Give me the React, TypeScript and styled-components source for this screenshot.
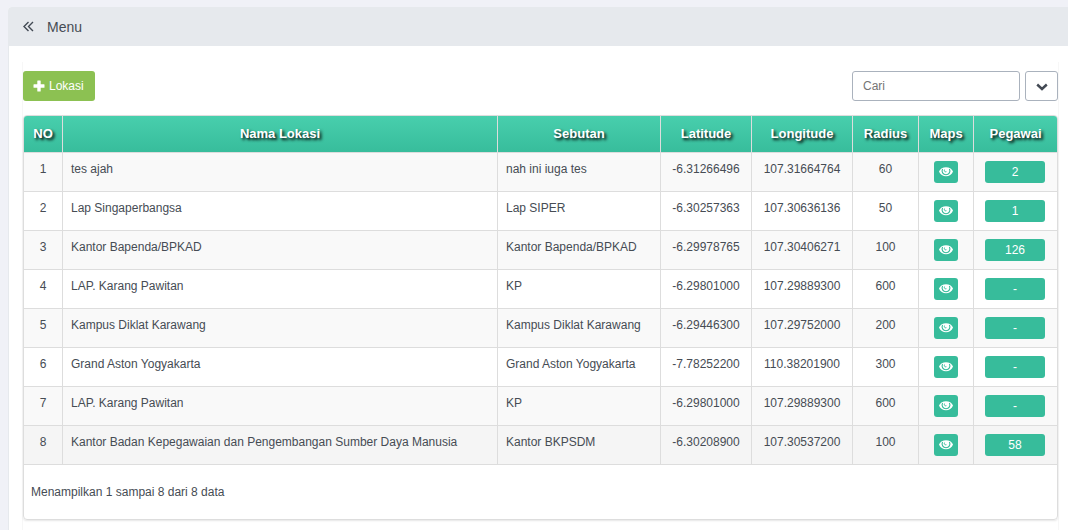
import React from "react";
import styled, { createGlobalStyle } from "styled-components";

const GlobalStyle = createGlobalStyle`
  * { box-sizing: border-box; }
  body {
    margin: 0;
    background: #f0f1f7;
    color: #464c54;
    font-family: "Liberation Sans", Arial, sans-serif;
    font-size: 12px;
    line-height: 16px;
  }
  button, input { font: inherit; }
`;

const Page = styled.main`
  padding: 7px 0 0 8px;
`;

const Panel = styled.section`
  background: #fff;
  border-radius: 4px 0 0 0;
  overflow: hidden;
`;

const PanelHeader = styled.header`
  display: flex;
  align-items: center;
  gap: 12px;
  height: 39px;
  padding: 0 15px;
  background: #e6e9ed;
`;

const CollapseButton = styled.button`
  display: flex;
  padding: 0;
  border: 0;
  background: none;
  color: #434a54;
`;

const PanelTitle = styled.h1`
  margin: 0;
  padding-top: 1px;
  font-size: 14px;
  font-weight: 400;
`;

const PanelBody = styled.div`
  padding: 16px 9px 0 13px;
  border-left: 1px solid #e6e9ed;
`;

const Content = styled.div`
  padding: 9px 0 11px;
  border: solid #f7f7f7;
  border-width: 0 1px;
`;

const Toolbar = styled.div`
  display: flex;
  align-items: center;
  justify-content: space-between;
  margin-bottom: 14px;
`;

const AddButton = styled.button`
  display: flex;
  align-items: center;
  gap: 4px;
  height: 30px;
  padding: 0 11px 0 10px;
  border: 0;
  border-radius: 3px;
  background: #8cc152;
  color: #fff;
`;

const SearchGroup = styled.div`
  display: flex;
  gap: 5px;
`;

const SearchInput = styled.input`
  width: 168px;
  height: 30px;
  padding: 0 10px;
  border: 1px solid #aab2bd;
  border-radius: 3px;
  background: #fff;
  color: #434a54;
  &::placeholder { color: #757575; opacity: 1; }
`;

const DropButton = styled.button`
  display: flex;
  align-items: center;
  justify-content: center;
  width: 33px;
  height: 30px;
  padding: 0;
  border: 1px solid #aab2bd;
  border-radius: 3px;
  background: #fff;
  color: #434a54;
`;

const Card = styled.div`
  border: 1px solid #ddd;
  border-radius: 4px;
  box-shadow: 0 1px 2px rgba(0, 0, 0, 0.1);
  overflow: hidden;
`;

const Table = styled.table`
  width: 100%;
  border-collapse: separate;
  border-spacing: 0;
  table-layout: fixed;
`;

const Col = styled.col<{ $width?: number }>`
  width: ${(p) => (p.$width ? `${p.$width}px` : "auto")};
`;

const HeadRow = styled.tr`
  background: linear-gradient(#48cfad, #37bc9b);
`;

const HeadCell = styled.th`
  height: 37px;
  padding: 0;
  border: solid #ddd;
  border-width: 0 1px 1px 0;
  color: #fff;
  font-size: 13px;
  text-align: center;
  text-shadow: 2px 2px 3px #000;
  &:last-child { border-right: 0; }
`;

const Row = styled.tr<{ $hover?: boolean }>`
  background: #fff;
  &:nth-child(odd) { background: #f9f9f9; }
  &&:hover, ${(p) => (p.$hover ? "&&" : "&&:active")} { background: #f5f5f5; }
`;

const Cell = styled.td<{ $center?: boolean }>`
  height: 39px;
  padding: 8px;
  border: solid #ddd;
  border-width: 0 1px 1px 0;
  text-align: ${(p) => (p.$center ? "center" : "left")};
  vertical-align: top;
  white-space: nowrap;
  &:last-child { border-right: 0; padding-right: 9px; }
`;

const ActionButton = styled.button<{ $wide?: boolean }>`
  display: flex;
  align-items: center;
  justify-content: center;
  width: ${(p) => (p.$wide ? 60 : 24)}px;
  height: 22px;
  margin: 0 auto;
  padding: 0;
  border: 0;
  border-radius: 3px;
  background: #37bc9b;
  color: #fff;
`;

const Summary = styled.p`
  margin: 0;
  padding: 19px 7px;
`;

const AnglesIcon = () => (
  <svg width="12" height="12" viewBox="0 0 12 12" fill="none" stroke="currentColor" strokeWidth="1.4" aria-hidden="true">
    <path d="M5.500 1 1 5.500 5.500 10M10 1 5.500 5.500 10 10" />
  </svg>
);

const PlusIcon = () => (
  <svg width="12" height="12" viewBox="0 0 12 12" fill="currentColor" aria-hidden="true">
    <path d="M4.300 1Q4.300.5 4.800.5H7.200Q7.700.5 7.700 1V4.300H11Q11.500 4.300 11.500 4.800V7.200Q11.500 7.700 11 7.700H7.700V11Q7.700 11.500 7.200 11.500H4.800Q4.300 11.500 4.300 11V7.700H1Q.5 7.700.5 7.200V4.800Q.5 4.300 1 4.300H4.300Z" />
  </svg>
);

const ChevronIcon = () => (
  <svg width="12" height="12" viewBox="0 0 12 12" fill="none" stroke="currentColor" strokeWidth="2.400" aria-hidden="true">
    <path d="m1.200 4.500 4.800 4.500 4.800-4.500" />
  </svg>
);

const EyeIcon = () => (
  <svg width="14" height="12" viewBox="0 0 14 12" aria-hidden="true">
    <path fill="currentColor" d="M0 5.500C2-.2 12-.2 14 5.500 12 11.800 2 11.800 0 5.500Z" />
    <path fill="none" stroke="#37bc9b" strokeWidth="1.100" d="M3.600 3C2.100 5.700 4 8.700 7 8.700S11.900 5.700 10.400 3" />
    <path fill="none" stroke="#37bc9b" strokeWidth="1" d="M5.500 3.600C4.800 5.200 6.200 6.200 7.400 5.700" />
  </svg>
);

const columns: { label: string; width?: number }[] = [
  { label: "NO", width: 39 },
  { label: "Nama Lokasi" },
  { label: "Sebutan", width: 163 },
  { label: "Latitude", width: 91 },
  { label: "Longitude", width: 101 },
  { label: "Radius", width: 66 },
  { label: "Maps", width: 55 },
  { label: "Pegawai", width: 83 },
];

const locations = [
  ["tes ajah", "nah ini iuga tes", "-6.31266496", "107.31664764", "60", "2"],
  ["Lap Singaperbangsa", "Lap SIPER", "-6.30257363", "107.30636136", "50", "1"],
  ["Kantor Bapenda/BPKAD", "Kantor Bapenda/BPKAD", "-6.29978765", "107.30406271", "100", "126"],
  ["LAP. Karang Pawitan", "KP", "-6.29801000", "107.29889300", "600", "-"],
  ["Kampus Diklat Karawang", "Kampus Diklat Karawang", "-6.29446300", "107.29752000", "200", "-"],
  ["Grand Aston Yogyakarta", "Grand Aston Yogyakarta", "-7.78252200", "110.38201900", "300", "-"],
  ["LAP. Karang Pawitan", "KP", "-6.29801000", "107.29889300", "600", "-"],
  ["Kantor Badan Kepegawaian dan Pengembangan Sumber Daya Manusia", "Kantor BKPSDM", "-6.30208900", "107.30537200", "100", "58"],
];

export default function App() {
  return (
    <Page>
      <GlobalStyle />
      <Panel>
        <PanelHeader>
          <CollapseButton type="button" aria-label="Menu">
            <AnglesIcon />
          </CollapseButton>
          <PanelTitle>Menu</PanelTitle>
        </PanelHeader>
        <PanelBody>
          <Content>
            <Toolbar>
              <AddButton type="button">
                <PlusIcon />
                Lokasi
              </AddButton>
              <SearchGroup>
                <SearchInput type="text" placeholder="Cari" aria-label="Cari" />
                <DropButton type="button" aria-label="Cari">
                  <ChevronIcon />
                </DropButton>
              </SearchGroup>
            </Toolbar>
            <Card>
              <Table>
                <colgroup>
                  {columns.map((c) => (
                    <Col key={c.label} $width={c.width} />
                  ))}
                </colgroup>
                <thead>
                  <HeadRow>
                    {columns.map((c) => (
                      <HeadCell key={c.label} scope="col">{c.label}</HeadCell>
                    ))}
                  </HeadRow>
                </thead>
                <tbody>
                  {locations.map(([name, alias, lat, lng, radius, staff], i) => (
                    <Row key={i} $hover={i === 7}>
                      <Cell $center>{i + 1}</Cell>
                      <Cell>{name}</Cell>
                      <Cell>{alias}</Cell>
                      <Cell $center>{lat}</Cell>
                      <Cell $center>{lng}</Cell>
                      <Cell $center>{radius}</Cell>
                      <Cell $center>
                        <ActionButton type="button" aria-label="Maps">
                          <EyeIcon />
                        </ActionButton>
                      </Cell>
                      <Cell $center>
                        <ActionButton type="button" $wide>{staff}</ActionButton>
                      </Cell>
                    </Row>
                  ))}
                </tbody>
              </Table>
              <Summary>Menampilkan 1 sampai 8 dari 8 data</Summary>
            </Card>
          </Content>
        </PanelBody>
      </Panel>
    </Page>
  );
}
